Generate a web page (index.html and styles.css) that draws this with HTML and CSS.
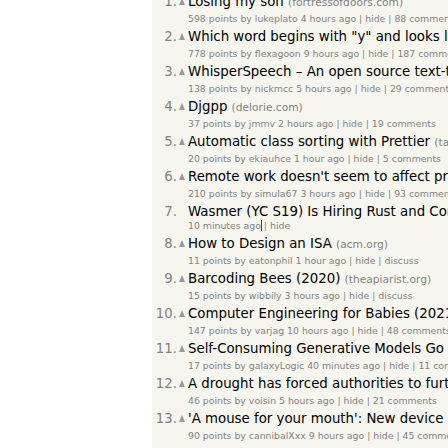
FILE: index.html
```html
<!DOCTYPE html>
<html>
<head>
<meta charset="utf-8">
<link rel="stylesheet" href="styles.css">
</head>
<body>
<main class="board">
  <ol class="stories">
    <li class="item">
      <span class="rank">1.</span><span class="vote"><span class="arrow"></span></span>
      <span class="title"><a href="#">Losing my son</a> <span class="site">(fortressofdoors.com)</span></span>
      <span class="sub">598 points by lukeplato 4 hours ago | hide | 88 comments</span>
    </li>
    <li class="item">
      <span class="rank">2.</span><span class="vote"><span class="arrow"></span></span>
      <span class="title"><a href="#">Which word begins with "y" and looks like an axe in this picture?</a> <span class="site">(astralcodexten.com)</span></span>
      <span class="sub">778 points by flexagoon 9 hours ago | hide | 187 comments</span>
    </li>
    <li class="item">
      <span class="rank">3.</span><span class="vote"><span class="arrow"></span></span>
      <span class="title"><a href="#">WhisperSpeech – An open source text-to-speech system built by inverting Whisper</a> <span class="site">(github.com)</span></span>
      <span class="sub">138 points by nickmcc 5 hours ago | hide | 29 comments</span>
    </li>
    <li class="item">
      <span class="rank">4.</span><span class="vote"><span class="arrow"></span></span>
      <span class="title"><a href="#">Djgpp</a> <span class="site">(delorie.com)</span></span>
      <span class="sub">37 points by jmmv 2 hours ago | hide | 19 comments</span>
    </li>
    <li class="item">
      <span class="rank">5.</span><span class="vote"><span class="arrow"></span></span>
      <span class="title"><a href="#">Automatic class sorting with Prettier</a> <span class="site">(tailwindcss.com)</span></span>
      <span class="sub">20 points by ekiauhce 1 hour ago | hide | 5 comments</span>
    </li>
    <li class="item">
      <span class="rank">6.</span><span class="vote"><span class="arrow"></span></span>
      <span class="title"><a href="#">Remote work doesn't seem to affect productivity, Fed study finds</a> <span class="site">(fortune.com)</span></span>
      <span class="sub">210 points by simula67 3 hours ago | hide | 93 comments</span>
    </li>
    <li class="item job">
      <span class="rank">7.</span><span class="vote"></span>
      <span class="title"><a href="#">Wasmer (YC S19) Is Hiring Rust and Compiler Engineers</a> <span class="site">(workatastartup.com)</span></span>
      <span class="sub"><span class="focused">10 minutes ago</span> | hide</span>
    </li>
    <li class="item">
      <span class="rank">8.</span><span class="vote"><span class="arrow"></span></span>
      <span class="title"><a href="#">How to Design an ISA</a> <span class="site">(acm.org)</span></span>
      <span class="sub">11 points by eatonphil 1 hour ago | hide | discuss</span>
    </li>
    <li class="item">
      <span class="rank">9.</span><span class="vote"><span class="arrow"></span></span>
      <span class="title"><a href="#">Barcoding Bees (2020)</a> <span class="site">(theapiarist.org)</span></span>
      <span class="sub">15 points by wibbily 3 hours ago | hide | discuss</span>
    </li>
    <li class="item">
      <span class="rank">10.</span><span class="vote"><span class="arrow"></span></span>
      <span class="title"><a href="#">Computer Engineering for Babies (2021)</a> <span class="site">(computerengineeringforbabies.com)</span></span>
      <span class="sub">147 points by varjag 10 hours ago | hide | 48 comments</span>
    </li>
    <li class="item">
      <span class="rank">11.</span><span class="vote"><span class="arrow"></span></span>
      <span class="title"><a href="#">Self-Consuming Generative Models Go MAD</a> <span class="site">(arxiv.org)</span></span>
      <span class="sub">17 points by galaxyLogic 40 minutes ago | hide | 11 comments</span>
    </li>
    <li class="item">
      <span class="rank">12.</span><span class="vote"><span class="arrow"></span></span>
      <span class="title"><a href="#">A drought has forced authorities to further restrict ships in the Panama Canal</a> <span class="site">(theguardian.com)</span></span>
      <span class="sub">46 points by voisin 5 hours ago | hide | 21 comments</span>
    </li>
    <li class="item">
      <span class="rank">13.</span><span class="vote"><span class="arrow"></span></span>
      <span class="title"><a href="#">'A mouse for your mouth': New device lets people control computers with their tongue</a> <span class="site">(bbc.com)</span></span>
      <span class="sub">90 points by cannibalXxx 9 hours ago | hide | 45 comments</span>
    </li>
  </ol>
</main>
</body>
</html>
```
FILE: styles.css
```css
html, body {
  margin: 0;
  padding: 0;
  background: #ffffff;
  overflow: hidden;
}

.board {
  margin-left: 152px;
  background: #f6f6ef;
  height: 100vh;
  font-family: "DejaVu Sans", Verdana, sans-serif;
}

.stories {
  list-style: none;
  margin: 0;
  padding: 0;
  position: relative;
  top: -6px;
}

.item {
  display: grid;
  grid-template-columns: 25px 11px 1fr;
  grid-template-rows: 19px 11px;
  margin-bottom: 5px;
  white-space: nowrap;
}

.item.job {
  grid-template-rows: 16px 11px;
}

.rank {
  grid-column: 1;
  grid-row: 1;
  text-align: right;
  font-size: 13.33px;
  line-height: 16px;
  color: #828282;
}

.vote {
  grid-column: 2;
  grid-row: 1;
  padding: 4px 0 0 2px;
}

.arrow {
  display: block;
  width: 0;
  height: 0;
  border-left: 3.5px solid transparent;
  border-right: 3.5px solid transparent;
  border-bottom: 7px solid #9a9a9a;
}

.title {
  grid-column: 3;
  grid-row: 1;
  font-size: 13.33px;
  line-height: 16px;
  overflow: hidden;
}

.title a {
  color: #000000;
  text-decoration: none;
}

.site {
  font-size: 10.67px;
  color: #828282;
}

.sub {
  grid-column: 3;
  grid-row: 2;
  font-size: 9.33px;
  line-height: 11px;
  color: #828282;
  overflow: hidden;
}

.focused {
  outline: 1px solid #e00000;
  outline-offset: 0;
}
```
